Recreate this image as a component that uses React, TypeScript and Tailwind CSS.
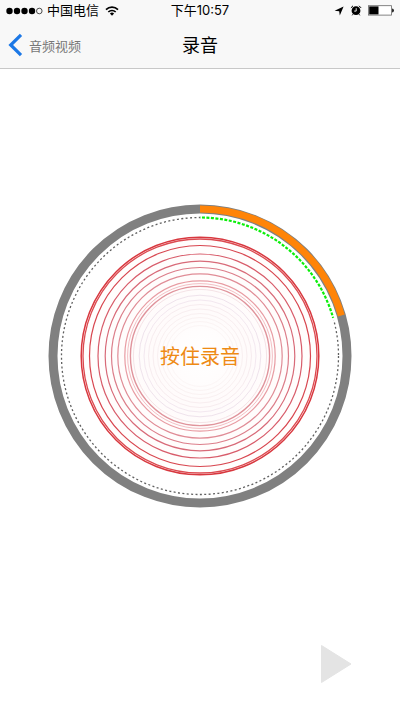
const CENTER = 152;

const rings = [
  { r: 118.8, color: "#d8383f", width: 1.5 },
  { r: 117, color: "#dc4a50", width: 1.3 },
  { r: 110.5, color: "#d8464f", width: 1.2 },
  { r: 102, color: "#d85c6a", width: 1.2 },
  { r: 94.8, color: "#d86a78", width: 1.2 },
  { r: 88.5, color: "#dc7e8a", width: 1.2 },
  { r: 82.2, color: "#e08c96", width: 1.2 },
  { r: 75.2, color: "#e89ca3", width: 1.2 },
  { r: 72.4, color: "#f3c0c5", width: 1 },
  { r: 69.6, color: "#e0949c", width: 1.4 },
  { r: 66.6, color: "#f5e3e6", width: 1 },
  { r: 60.8, color: "#efe3ec", width: 1 },
  { r: 56, color: "#f3e8f0", width: 1 },
  { r: 51.5, color: "#f7ecef", width: 1 },
  { r: 47, color: "#f8eef0", width: 1 },
  { r: 42.5, color: "#f9f0f1", width: 1 },
  { r: 38.5, color: "#faf2f2", width: 1 },
  { r: 34.5, color: "#fbf4f4", width: 1 },
  { r: 30.5, color: "#fcf6f6", width: 1 },
];

function arcPath(radius: number, degrees: number) {
  const angle = (degrees * Math.PI) / 180;
  const x = CENTER + radius * Math.sin(angle);
  const y = CENTER - radius * Math.cos(angle);
  return `M${CENTER} ${CENTER - radius} A${radius} ${radius} 0 0 1 ${x} ${y}`;
}

function StatusBar() {
  return (
    <div className="grid h-5 grid-cols-3 items-center px-1.5 pt-px text-[13px]">
      <div className="flex items-center gap-1 whitespace-nowrap">
        <svg width="37" height="8" viewBox="0 0 37 8" aria-hidden="true">
          {[3.5, 11, 18.5, 26].map((x) => (
            <circle key={x} cx={x} cy="4" r="3.2" fill="#000" />
          ))}
          <circle cx="33.3" cy="4" r="2.8" fill="none" stroke="#222" strokeWidth="0.8" />
        </svg>
        <span>中国电信</span>
        <svg className="ml-0.5 shrink-0" width="14" height="10" viewBox="0 0 14 10" fill="none" stroke="#000" strokeWidth="1.7" aria-hidden="true">
          <path d="M1 3.6C4.4.4 9.6.4 13 3.6" />
          <path d="M3.3 6C5.4 4 8.6 4 10.7 6" />
          <path d="M7 9.7 4.9 7.6a3 3 0 0 1 4.2 0Z" fill="#000" stroke="none" />
        </svg>
      </div>
      <div className="text-center font-['Inter','Noto_Sans_CJK_SC',sans-serif] whitespace-nowrap">
        下午10:57
      </div>
      <div className="flex items-center justify-end">
        <svg width="10" height="10" viewBox="0 0 10 10" aria-hidden="true">
          <path d="M9.6.6 5.8 9.6 5.2 5.2.6 4.7Z" fill="#000" />
        </svg>
        <svg className="ml-1.5" width="12" height="11" viewBox="0 0 12 11" aria-hidden="true">
          <circle cx="6" cy="5.7" r="4.4" fill="#000" />
          <path d="M.9 2.9 3 .8M11.1 2.9 9 .8M3 9.2l-.8 1.1M9 9.2l.8 1.1" stroke="#000" strokeWidth="1" />
          <path d="M6.2 3.2v2.9H4.2" fill="none" stroke="#fff" strokeWidth="0.9" />
        </svg>
        <svg className="ml-1.5" width="26" height="11" viewBox="0 0 26 11" aria-hidden="true">
          <rect x="0.5" y="0.7" width="23" height="9.4" fill="#fff" stroke="#666" strokeWidth="0.8" />
          <rect x="1.2" y="1.4" width="9.3" height="8" fill="#000" />
          <path d="M24.2 3.4q1.6.2 1.6 2t-1.6 2Z" fill="#000" />
        </svg>
      </div>
    </div>
  );
}

function Dial() {
  return (
    <button type="button" className="relative flex size-76 items-center justify-center rounded-full">
      <svg className="absolute inset-0" viewBox="0 0 304 304" fill="none" aria-hidden="true">
        <defs>
          <radialGradient id="glow">
            <stop offset="0" stopColor="#ffffff" />
            <stop offset="0.4" stopColor="#fffbfb" />
            <stop offset="1" stopColor="#fffefd" />
          </radialGradient>
        </defs>
        <circle cx={CENTER} cy={CENTER} r="147" stroke="#808080" strokeWidth="9" />
        <path d={arcPath(147, 74)} stroke="#ff8408" strokeWidth="7" />
        <circle cx={CENTER} cy={CENTER} r="138.5" stroke="#606060" strokeWidth="1.3" strokeDasharray="2 2.4" />
        <path d={arcPath(138.5, 75)} stroke="#fff" strokeWidth="3" />
        <path d={arcPath(138.5, 74)} stroke="#0aee0a" strokeWidth="2.2" strokeDasharray="3 1.5" strokeDashoffset="-2" />
        <circle cx={CENTER} cy={CENTER} r="118" fill="url(#glow)" />
        {rings.map((ring) => (
          <circle key={ring.r} cx={CENTER} cy={CENTER} r={ring.r} stroke={ring.color} strokeWidth={ring.width} />
        ))}
      </svg>
      <span className="relative pt-0.5 text-xl text-[#ee8a14]">按住录音</span>
    </button>
  );
}

export default function App() {
  return (
    <div className="flex min-h-screen flex-col bg-white font-['Liberation_Sans','Noto_Sans_CJK_SC',sans-serif] text-black">
      <header className="border-b border-[#c8c8c8] bg-[#f8f8f8]">
        <StatusBar />
        <nav className="grid h-12 grid-cols-3 items-center px-2 pt-0.5">
          <button type="button" className="flex items-center gap-1.5 text-[13px] text-[#777]">
            <svg width="15" height="24" viewBox="0 0 15 24" fill="none" aria-hidden="true">
              <path d="M13 1.8 2.7 12 13 22.2" stroke="#1c78e6" strokeWidth="3.2" />
            </svg>
            <span className="pt-1">音频视频</span>
          </button>
          <h1 className="pt-0.5 text-center text-lg font-normal">录音</h1>
        </nav>
      </header>
      <main className="flex flex-1 flex-col items-center pt-[135px]">
        <Dial />
        <button type="button" aria-label="播放" className="mt-auto mr-12 mb-7 self-end">
          <svg width="32" height="40" viewBox="0 0 32 40" aria-hidden="true">
            <path d="M1.5 1.5 31 20 1.5 38.5Z" fill="#e4e4e4" stroke="#e4e4e4" strokeLinejoin="round" />
          </svg>
        </button>
      </main>
    </div>
  );
}
